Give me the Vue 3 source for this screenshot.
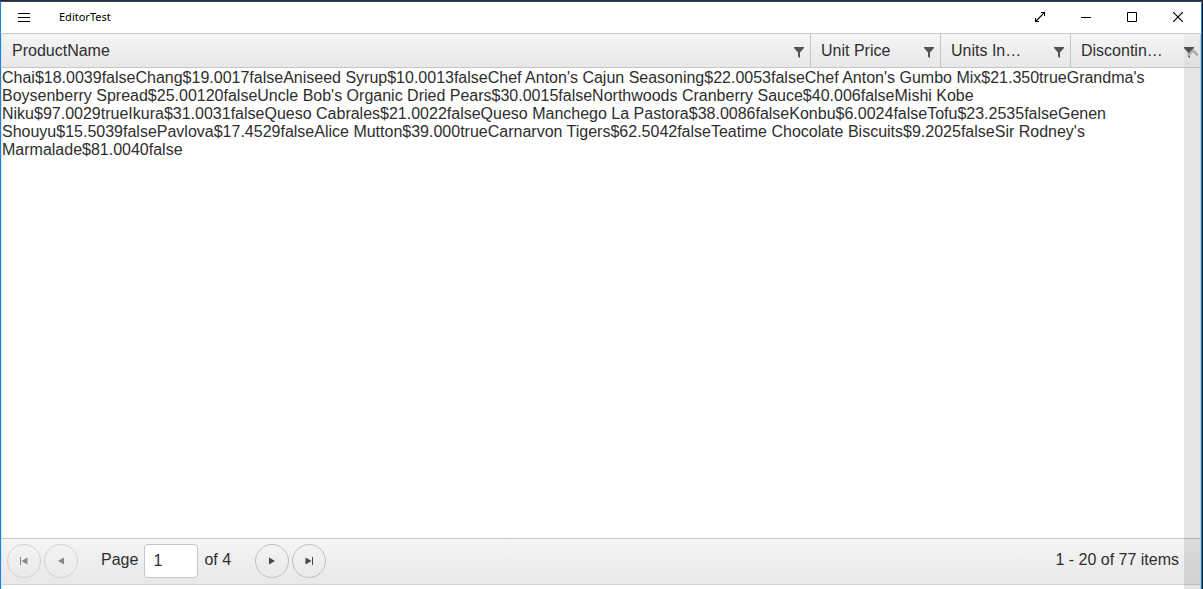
<script setup>
import { ref } from 'vue'

const columns = [
  { title: 'ProductName', label: 'ProductName', cls: 'wide' },
  { title: 'Unit Price', label: 'Unit Price', cls: 'narrow' },
  { title: 'Units In Stock', label: 'Units In…', cls: 'narrow' },
  { title: 'Discontinued', label: 'Discontin…', cls: 'narrow' },
]

const products = [
  ['Chai', '$18.00', 39, false],
  ['Chang', '$19.00', 17, false],
  ['Aniseed Syrup', '$10.00', 13, false],
  ["Chef Anton's Cajun Seasoning", '$22.00', 53, false],
  ["Chef Anton's Gumbo Mix", '$21.35', 0, true],
  ["Grandma's Boysenberry Spread", '$25.00', 120, false],
  ["Uncle Bob's Organic Dried Pears", '$30.00', 15, false],
  ['Northwoods Cranberry Sauce', '$40.00', 6, false],
  ['Mishi Kobe Niku', '$97.00', 29, true],
  ['Ikura', '$31.00', 31, false],
  ['Queso Cabrales', '$21.00', 22, false],
  ['Queso Manchego La Pastora', '$38.00', 86, false],
  ['Konbu', '$6.00', 24, false],
  ['Tofu', '$23.25', 35, false],
  ['Genen Shouyu', '$15.50', 39, false],
  ['Pavlova', '$17.45', 29, false],
  ['Alice Mutton', '$39.00', 0, true],
  ['Carnarvon Tigers', '$62.50', 42, false],
  ['Teatime Chocolate Biscuits', '$9.20', 25, false],
  ["Sir Rodney's Marmalade", '$81.00', 40, false],
]

const page = ref('1')
</script>

<template>
  <div class="window">
    <header class="titlebar">
      <button class="menu" type="button" aria-label="Menu">
        <svg width="12" height="9" viewBox="0 0 12 9" shape-rendering="crispEdges"><path d="M0 .5H12M0 4.5H12M0 8.5H12" stroke="#000" /></svg>
      </button>
      <span class="app-name">EditorTest</span>
      <button class="caption" type="button" aria-label="Full screen">
        <svg width="10" height="10" viewBox="0 0 10 10"><path d="M.5 9.500L9.500 .5M6 .5H9.500V4M.5 6V9.500H4" fill="none" stroke="#000" stroke-width="1.100" /></svg>
      </button>
      <button class="caption" type="button" aria-label="Minimize">
        <svg width="10" height="10" viewBox="0 0 10 10" shape-rendering="crispEdges"><path d="M0 5.500H10" stroke="#000" /></svg>
      </button>
      <button class="caption" type="button" aria-label="Maximize">
        <svg width="10" height="10" viewBox="0 0 10 10"><path d="M.5 .5H9.500V9.500H.5Z" fill="none" stroke="#000" /></svg>
      </button>
      <button class="caption" type="button" aria-label="Close">
        <svg width="10" height="10" viewBox="0 0 10 10"><path d="M0 0L10 10M10 0L0 10" stroke="#000" stroke-width="1.200" /></svg>
      </button>
    </header>

    <main class="grid">
      <table class="head">
        <thead>
          <tr>
            <th v-for="c in columns" :key="c.title" :class="c.cls" scope="col">
              <div class="cell">
                <span>{{ c.label }}</span>
                <a href="#" class="filter" :aria-label="'Filter ' + c.title">
                  <svg width="10" height="11" viewBox="0 0 10 11"><path d="M0 0H10V1L6 5.500V11L4 9.500V5.500L0 1Z" fill="#5b4f4b" /></svg>
                </a>
              </div>
            </th>
          </tr>
        </thead>
      </table>

      <div class="content"><template v-for="p in products" :key="p[0]"><span v-for="(v, i) in p" :key="i">{{ v }}</span></template></div>

      <nav class="pager" aria-label="Pages">
        <button class="round" type="button" disabled aria-label="First page">
          <svg width="8" height="8" viewBox="0 0 8 8"><path d="M0 0H1V8H0ZM7.500 .5V7.500L1.500 4Z" fill="currentColor" /></svg>
        </button>
        <button class="round" type="button" disabled aria-label="Previous page">
          <svg width="8" height="8" viewBox="0 0 8 8"><path d="M7 .5V7.500L1 4Z" fill="currentColor" /></svg>
        </button>
        <label class="page-label" for="page">Page</label>
        <input id="page" v-model="page" class="page-input" type="text" />
        <span class="page-count">of 4</span>
        <button class="round" type="button" aria-label="Next page">
          <svg width="8" height="8" viewBox="0 0 8 8"><path d="M1 .5V7.500L7 4Z" fill="currentColor" /></svg>
        </button>
        <button class="round" type="button" aria-label="Last page">
          <svg width="8" height="8" viewBox="0 0 8 8"><path d="M7 0H8V8H7ZM.5 .5V7.500L6.500 4Z" fill="currentColor" /></svg>
        </button>
        <span class="info">1 - 20 of 77 items</span>
      </nav>

      <div class="scrollbar" aria-hidden="true">
        <div class="scroll-up">
          <svg width="12" height="9" viewBox="0 0 12 9"><path d="M1 7.500L6 2.500L11 7.500" fill="none" stroke="#b0b0b0" stroke-width="2.500" /></svg>
        </div>
        <div class="scroll-track"></div>
      </div>
    </main>
  </div>
</template>

<style>
body {
  margin: 0;
  background: #fff;
}
</style>

<style scoped>
.window {
  box-sizing: border-box;
  display: flex;
  flex-direction: column;
  height: 100vh;
  border-top: 1px solid #2b2b2f;
  border-right: 1px solid #14161f;
  background: #fff;
  color: #2e2e2e;
  font: 16px/18px "Liberation Sans", Arial, sans-serif;
}

button {
  display: flex;
  align-items: center;
  justify-content: center;
  padding: 0;
  border: 0;
  background: none;
}

svg {
  display: block;
}

.titlebar {
  display: flex;
  align-items: stretch;
  height: 31px;
  border: 1px solid #1883d7;
  border-top-color: #294a68;
  border-bottom: 0;
}

.menu,
.caption {
  width: 46px;
  height: 30px;
}

.app-name {
  flex: 1;
  padding-left: 12px;
  color: #000;
  font: 11px/30px "Noto Sans", "Open Sans", sans-serif;
}

.grid {
  position: relative;
  display: flex;
  flex: 1;
  flex-direction: column;
  min-height: 0;
  padding: 0 1px 4px;
  border: 1px solid #1883d7;
  border-top-color: #c9c9c9;
  border-bottom: 0;
  box-shadow: inset -1px 0 #c5c5c5, inset 1px 0 #e4e4e4;
}

.head {
  width: 100%;
  border-bottom: 1px solid #c5c5c5;
  border-spacing: 0;
  table-layout: fixed;
  background: linear-gradient(#f5f5f5, #e9e7e8);
}

th {
  padding: 0;
  border-left: 1px solid #c5c5c5;
  font-weight: normal;
  text-align: left;
}

th:first-child {
  border-left: 0;
}

.narrow {
  width: 129px;
}

.cell {
  display: flex;
  align-items: center;
  justify-content: space-between;
  height: 33px;
  padding: 0 6px 0 10px;
}

.filter {
  padding-top: 4px;
}

.content {
  flex: 1;
  padding: 1px 16px 0 0;
}

.pager {
  display: flex;
  align-items: center;
  height: 44px;
  padding: 0 21px 1px 5px;
  border-top: 1px solid #c5c5c5;
  border-bottom: 1px solid #d2d2d2;
  background: linear-gradient(#f5f5f5, #e9e7e8);
}

.round {
  width: 34px;
  height: 34px;
  margin-right: 3px;
  border: 1px solid #c0c0c0;
  border-radius: 50%;
  color: #4d4442;
}

.round:disabled {
  border-color: #d2d2d2;
  color: #8b8684;
}

.page-label {
  padding: 0 6px 2px 20px;
}

.page-input {
  box-sizing: border-box;
  width: 54px;
  height: 34px;
  padding: 0 8px;
  border: 1px solid #c5c5c5;
  border-radius: 4px;
  background: #fff;
  color: #2e2e2e;
  font: inherit;
}

.page-count {
  padding: 0 24px 2px 6px;
}

.info {
  margin-left: auto;
  padding-bottom: 2px;
}

.scrollbar {
  position: absolute;
  top: 0;
  right: 1px;
  bottom: 0;
  display: flex;
  flex-direction: column;
  width: 16px;
}

.scroll-up {
  box-sizing: border-box;
  height: 34px;
  padding: 14px 0 0 3px;
  background: rgba(0, 0, 0, 0.03);
}

.scroll-track {
  flex: 1;
  background: rgba(0, 0, 0, 0.1);
}
</style>
